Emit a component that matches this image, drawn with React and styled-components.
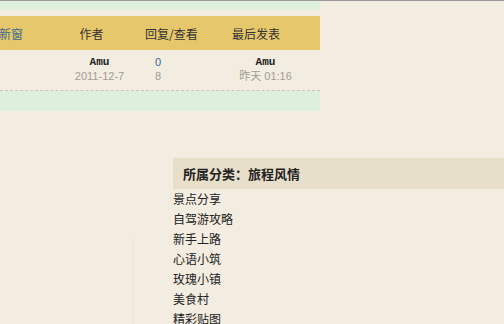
import React from "react";
import styled, { createGlobalStyle } from "styled-components";

const GlobalStyle = createGlobalStyle`
  html, body {
    margin: 0;
    padding: 0;
    background: #f3ece0;
  }
  body {
    font-family: "Noto Sans CJK SC", "Liberation Sans", sans-serif;
    font-size: 12px;
    color: #333;
  }
`;

const categories = ["景点分享", "自驾游攻略", "新手上路", "心语小筑", "玫瑰小镇", "美食村", "精彩贴图"];

const App = () => {
  return (
    <Page>
      <GlobalStyle />
      <Topic>
        <Strip />
        <HeadRow>
          <Cell $align="left" $pl={0}><NewWin>新窗</NewWin></Cell>
          <Cell $align="center" $pr={12}>作者</Cell>
          <Cell $align="left" $pl={10}>回复/查看</Cell>
          <Cell $align="center" $pr={13}>最后发表</Cell>
        </HeadRow>
        <DataRow>
          <Cell />
          <Cell $align="center" $pl={4}>
            <Author>Amu</Author>
            <Muted>2011-12-7</Muted>
          </Cell>
          <Cell $align="left" $pl={20}>
            <Count>0</Count>
            <Muted>8</Muted>
          </Cell>
          <Cell $align="center" $pl={6}>
            <Author>Amu</Author>
            <Muted>昨天 01:16</Muted>
          </Cell>
        </DataRow>
        <Band />
      </Topic>
      <Lower>
        <LeftCol />
        <Side>
          <SideTitle>所属分类：旅程风情</SideTitle>
          <CatList>
            {categories.map((c) => (
              <CatItem key={c}>{c}</CatItem>
            ))}
          </CatList>
        </Side>
      </Lower>
    </Page>
  );
};

const Page = styled.div`
  width: 504px;
  height: 324px;
  overflow: hidden;
  border-top: 1px solid #9a9a9a;
  box-sizing: border-box;
  background: #f3ece0;
`;

const Topic = styled.div`
  width: 320px;
  display: flex;
  flex-direction: column;
`;

const Strip = styled.div`
  height: 9px;
  margin-bottom: 6px;
  background: #deefdd;
`;

const HeadRow = styled.div`
  display: grid;
  grid-template-columns: 60px 75px 70px 115px;
  height: 34px;
  align-items: center;
  background: #e7c76c;
  font-size: 12px;
  color: #333;
`;

const DataRow = styled.div`
  display: grid;
  grid-template-columns: 60px 75px 70px 115px;
  padding-top: 5px;
  height: 35px;
  border-bottom: 1px dashed #c9c6bd;
`;

const Cell = styled.div`
  text-align: ${(p) => p.$align || "left"};
  padding-left: ${(p) => p.$pl || 0}px;
  padding-right: ${(p) => p.$pr || 0}px;
  display: flex;
  flex-direction: column;
  align-items: ${(p) => (p.$align === "center" ? "center" : "flex-start")};
`;

const NewWin = styled.span`
  color: #3e6a8c;
  margin-left: -1px;
`;

const Author = styled.span`
  font-family: "Liberation Mono", monospace;
  font-weight: bold;
  font-size: 11px;
  line-height: 14px;
  color: #222;
`;

const Muted = styled.span`
  font-family: "Liberation Sans", "Noto Sans CJK SC", sans-serif;
  font-size: 11px;
  line-height: 14px;
  color: #a09c96;
`;

const Count = styled.span`
  font-family: "Liberation Sans", sans-serif;
  font-size: 11px;
  line-height: 14px;
  color: #336699;
`;

const Band = styled.div`
  height: 20px;
  background: #deefdd;
`;

const Lower = styled.div`
  display: flex;
  align-items: stretch;
`;

const LeftCol = styled.div`
  width: 133px;
  flex-shrink: 0;
  margin-top: 125px;
  height: 120px;
  border-right: 1px solid #ece5d8;
`;

const Side = styled.div`
  flex: 1;
  margin-left: 39px;
  margin-top: 47px;
  display: flex;
  flex-direction: column;
`;

const SideTitle = styled.div`
  height: 31px;
  line-height: 31px;
  padding-left: 10px;
  background: #e8dfca;
  font-size: 13px;
  font-weight: bold;
  color: #222;
`;

const CatList = styled.ul`
  list-style: none;
  margin: 0;
  padding: 0;
`;

const CatItem = styled.li`
  height: 20px;
  line-height: 20px;
  font-size: 12px;
  color: #222;
`;

export default App;
